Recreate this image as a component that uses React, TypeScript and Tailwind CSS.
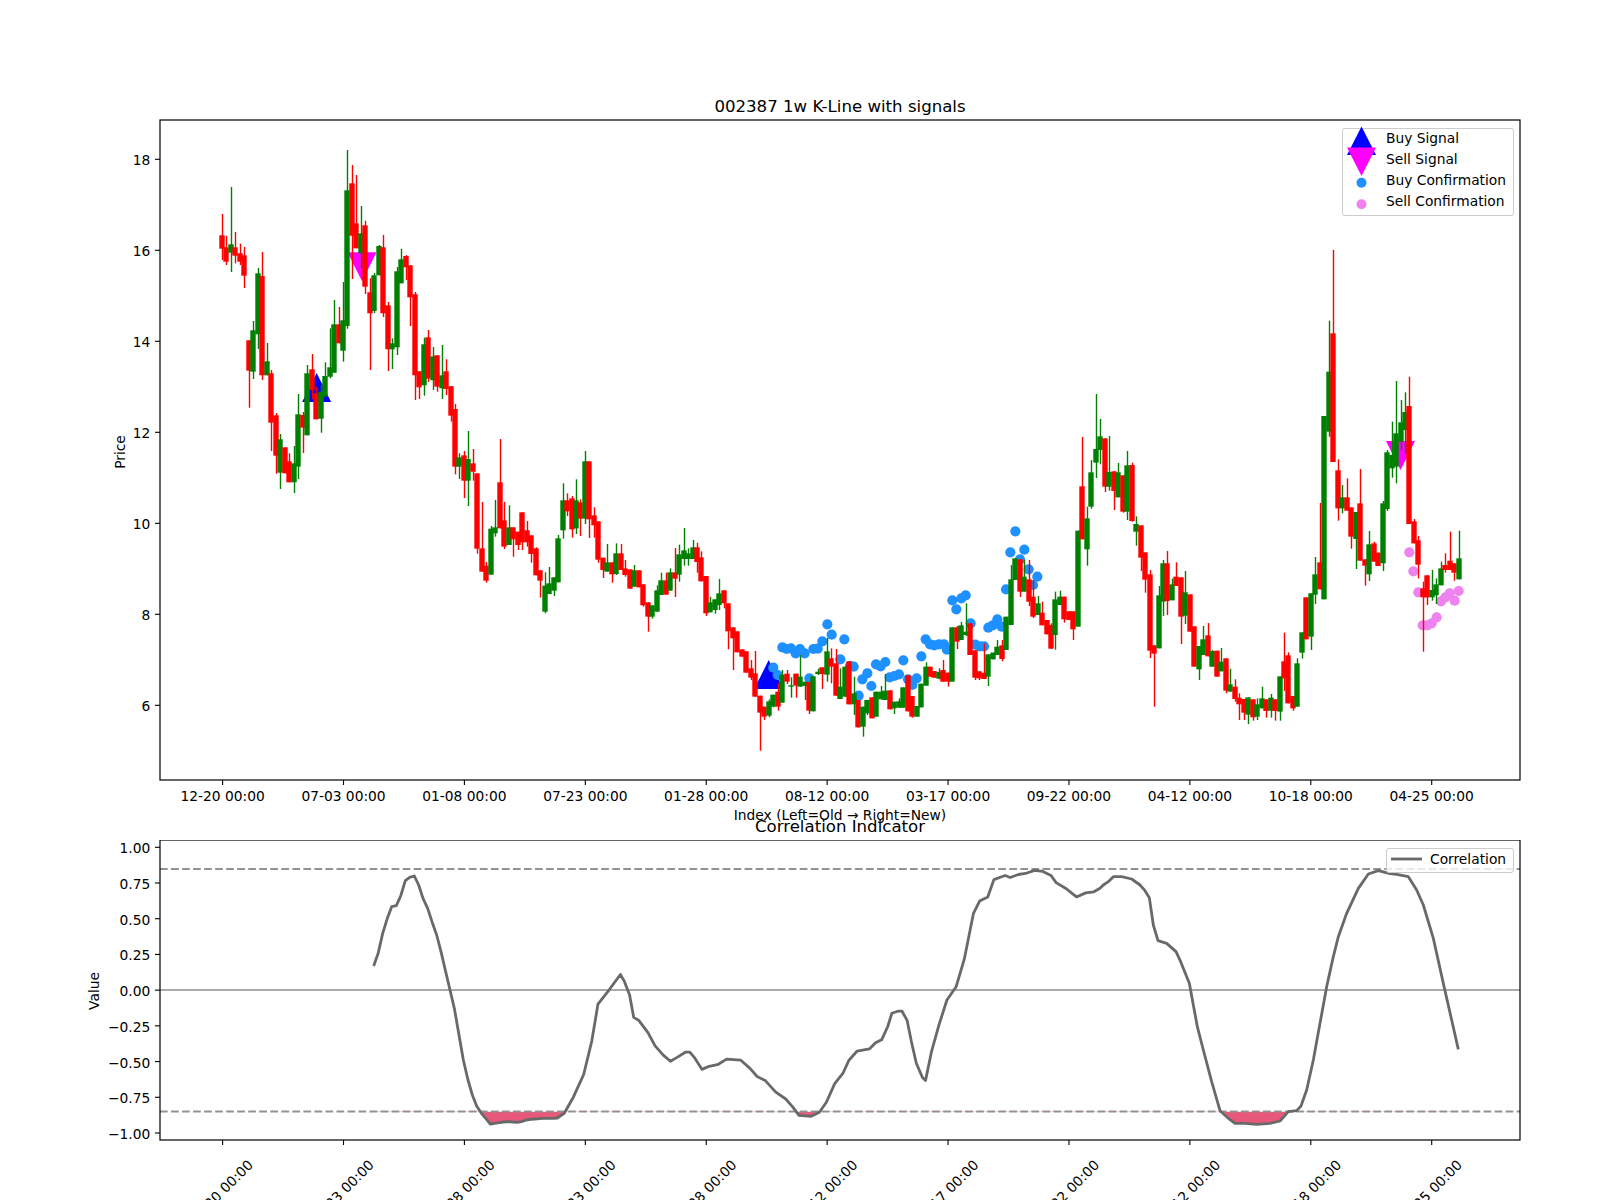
import React from 'react';

type Candle = ['r' | 'g', number, number, number, number];
type Pt = [number, number];

const font = "'DejaVu Sans', 'Liberation Sans', sans-serif";

const absRows: Candle[] = [
  ['r', 235.3, 248.7, 214, 260], ['r', 247.3, 261.7, 235.7, 265], ['g', 244.3, 252.7, 187, 272],
  ['r', 247.3, 255.7, 232, 263.3], ['r', 253.3, 261.7, 243.7, 265], ['r', 255.3, 275.7, 247, 288],
  ['r', 340.3, 370.7, 340.3, 407.7], ['g', 330.3, 371.7, 321, 379], ['g', 273.3, 334.3, 268, 349],
  ['r', 276, 375.3, 252, 380], ['g', 361.3, 375.3, 343, 375.3], ['r', 373.3, 422.7, 370, 451],
  ['r', 415.3, 455.7, 413, 473.7], ['g', 439.3, 472.7, 434, 489], ['r', 447.3, 473.3, 447.3, 473.3],
  ['r', 461.3, 482.3, 453.3, 482.3], ['g', 463.3, 482.3, 446, 493], ['g', 414.3, 466.7, 394, 479],
  ['r', 415, 427.7, 412, 453], ['g', 373.3, 435.3, 365, 435.3], ['r', 369.3, 390, 354, 399.3],
  ['r', 393.3, 419.3, 386.7, 419.3], ['g', 391.7, 418.7, 385, 432.7], ['g', 376, 396.7, 362.3, 396.7],
  ['g', 367.3, 376.7, 328.3, 378.3], ['g', 324.3, 372.7, 300, 372.7], ['r', 324.3, 343.3, 307, 343.3],
  ['g', 320.3, 350.7, 282, 361.7], ['g', 190.3, 326, 150, 328.7], ['r', 183.3, 235.7, 165, 279],
  ['r', 223.3, 248.3, 175, 248.3], ['g', 233.3, 253.3, 206, 269], ['r', 225.3, 286.7, 220.7, 294],
  ['r', 292.3, 313.3, 278.3, 370], ['g', 275.3, 311, 273, 313], ['g', 246, 275.3, 245, 275.3],
  ['r', 247.3, 313.3, 235, 317], ['r', 305.3, 349.3, 302, 371], ['g', 343.3, 349.3, 338.3, 369],
  ['g', 271.3, 347.3, 267, 355], ['g', 259.3, 283.3, 248.7, 283.3], ['r', 256, 267.3, 255, 280],
  ['r', 265.3, 297.3, 265.3, 326], ['r', 294.3, 375.3, 292, 400], ['r', 371.3, 387.3, 371.3, 399],
  ['g', 344.3, 385.3, 337.7, 395.7], ['r', 337.3, 378.7, 330, 382], ['g', 356.3, 380.3, 347, 390],
  ['r', 355.3, 386.7, 355.3, 391.7], ['g', 375.3, 388.3, 345, 399], ['r', 371.3, 389, 359.3, 395],
  ['r', 386.3, 415.7, 386, 421.7],
];

// rows below were read off 3x crops, y = y0 + value / 3
const rows380: Candle[] = [
  ['r', 87, 260, 72, 283], ['g', 232, 260, 220, 297], ['r', 226, 302, 213, 354], ['g', 237, 302, 153, 378],
  ['r', 250, 275, 207, 302], ['r', 280, 506, 280, 521], ['r', 505, 575, 366, 575], ['r', 557, 602, 546, 608],
  ['g', 446, 584, 438, 584], ['g', 442, 460, 360, 470], ['r', 307, 445, 177, 445], ['r', 421, 500, 366, 507],
  ['g', 442, 495, 376, 495], ['r', 442, 478, 442, 530], ['r', 455, 495, 455, 510], ['r', 397, 487, 397, 510],
  ['r', 451, 487, 423, 500], ['r', 466, 522, 466, 548], ['r', 505, 586, 502, 586], ['r', 571, 602, 571, 653],
  ['g', 617, 695, 577, 700], ['g', 610, 642, 561, 642], ['g', 592, 632, 592, 648], ['g', 475, 607, 465, 607],
];

const rows390: Candle[] = [
  ['g', 331, 421, 280, 446], ['r', 331, 364, 310, 378], ['r', 325, 418, 318, 443], ['g', 331, 415, 268, 432],
  ['r', 337, 386, 328, 438], ['g', 214, 386, 183, 402], ['r', 214, 388, 214, 444], ['r', 376, 406, 352, 443],
  ['r', 394, 509, 394, 518], ['r', 503, 540, 503, 564], ['g', 517, 545, 462, 545], ['r', 517, 553, 517, 578],
  ['g', 490, 552, 460, 555], ['r', 490, 540, 462, 540], ['r', 535, 555, 510, 560], ['r', 538, 596, 538, 596],
  ['g', 541, 590, 525, 590], ['r', 541, 592, 541, 592], ['r', 583, 646, 583, 650], ['r', 637, 680, 637, 725],
  ['g', 646, 680, 646, 686], ['g', 601, 665, 586, 665], ['g', 571, 615, 548, 615], ['r', 571, 614, 548, 614],
  ['g', 547, 602, 535, 602], ['r', 547, 566, 474, 621], ['g', 493, 554, 464, 575], ['g', 481, 507, 414, 527],
  ['g', 490, 507, 475, 527], ['g', 472, 507, 450, 507], ['r', 472, 516, 458, 548], ['r', 502, 574, 484, 574],
  ['r', 558, 670, 558, 678], ['g', 637, 667, 620, 667], ['g', 628, 660, 628, 671], ['g', 610, 645, 567, 660],
  ['r', 601, 640, 601, 655], ['r', 640, 724, 640, 778], ['r', 712, 745, 712, 840], ['r', 724, 787, 724, 787],
  ['r', 778, 800, 778, 800], ['r', 784, 848, 784, 848], ['r', 835, 863, 810, 870],
];

const rows500: Candle[] = [
  ['r', 520, 590, 453, 590], ['r', 587, 638, 587, 752], ['r', 620, 650, 620, 660], ['g', 604, 647, 598, 652],
  ['g', 584, 620, 584, 622], ['r', 575, 620, 550, 632], ['g', 524, 608, 510, 608], ['r', 521, 545, 510, 552],
  ['g', 556, 560, 532, 593], ['r', 521, 557, 521, 593], ['g', 530, 560, 465, 560], ['g', 545, 558, 545, 600],
  ['r', 546, 632, 546, 642], ['g', 529, 634, 529, 634], ['g', 515, 522, 506, 525], ['r', 502, 522, 502, 567],
  ['g', 454, 524, 414, 545], ['r', 475, 500, 445, 550], ['r', 490, 587, 447, 587], ['g', 560, 597, 505, 597],
  ['g', 500, 590, 500, 590], ['r', 484, 613, 484, 613], ['g', 580, 613, 530, 645], ['r', 600, 682, 600, 682],
  ['g', 620, 680, 620, 710], ['g', 600, 640, 600, 645], ['r', 592, 655, 592, 655], ['g', 575, 650, 575, 650],
  ['g', 575, 598, 558, 598], ['g', 572, 600, 522, 600], ['r', 571, 628, 571, 628], ['g', 605, 625, 605, 642],
  ['g', 604, 623, 595, 623], ['g', 562, 623, 562, 623], ['r', 526, 634, 526, 634], ['r', 588, 650, 588, 653],
  ['g', 618, 650, 618, 650], ['g', 551, 622, 551, 622], ['g', 500, 557, 487, 557], ['r', 500, 530, 500, 530],
  ['r', 513, 533, 513, 533], ['g', 516, 536, 505, 538], ['r', 510, 545, 480, 545], ['r', 518, 545, 518, 560],
  ['g', 382, 545, 382, 545], ['r', 382, 425, 378, 447], ['g', 376, 420, 366, 420], ['g', 395, 405, 310, 408],
  ['r', 370, 465, 370, 465], ['r', 451, 533, 451, 540], ['r', 514, 535, 514, 540], ['r', 518, 537, 430, 537],
  ['g', 463, 530, 463, 558], ['g', 458, 478, 458, 478], ['g', 440, 465, 420, 465], ['r', 436, 477, 420, 484],
  ['g', 350, 450, 350, 450], ['g', 238, 375, 195, 375], ['g', 175, 240, 175, 240], ['r', 178, 275, 178, 291],
  ['g', 230, 275, 180, 275], ['r', 238, 305, 180, 318], ['r', 290, 350, 240, 354], ['g', 310, 345, 288, 345],
  ['r', 338, 376, 305, 376], ['r', 360, 403, 360, 403], ['r', 375, 446, 370, 446],
];

const rows400: Candle[] = [
  ['g', 598, 705, 575, 749], ['g', 590, 615, 572, 615], ['r', 590, 658, 590, 668], ['r', 634, 660, 634, 660],
  ['r', 634, 688, 634, 720], ['g', 392, 680, 392, 680], ['r', 259, 418, 111, 418], ['g', 355, 448, 320, 497],
  ['g', 217, 320, 180, 326], ['g', 147, 188, -18, 234], ['g', 109, 150, 57, 193], ['r', 115, 260, 115, 276],
  ['g', 216, 260, 108, 272], ['r', 214, 273, 214, 330], ['g', 217, 292, 189, 292], ['r', 226, 335, 226, 338],
  ['g', 196, 335, 153, 360], ['r', 195, 363, 188, 365], ['g', 372, 395, 349, 437], ['r', 376, 473, 376, 513],
  ['r', 457, 539, 457, 578], ['r', 523, 752, 510, 774], ['r', 736, 761, 736, 920], ['g', 586, 745, 558, 745],
  ['g', 490, 605, 480, 648], ['r', 490, 603, 453, 645], ['g', 553, 601, 536, 601], ['r', 530, 558, 487, 558],
  ['r', 532, 650, 532, 732], ['g', 577, 647, 513, 672], ['r', 583, 695, 583, 695], ['r', 679, 800, 679, 800],
  ['g', 738, 808, 738, 840], ['g', 718, 765, 678, 765], ['r', 706, 769, 669, 769], ['g', 753, 800, 750, 800],
  ['r', 752, 830, 752, 830], ['g', 785, 814, 744, 814], ['r', 775, 872, 775, 880], ['g', 853, 875, 806, 875],
  ['r', 860, 897, 838, 905], ['r', 893, 913, 880, 960], ['r', 897, 938, 897, 960], ['g', 892, 944, 892, 972],
  ['r', 898, 952, 898, 962], ['g', 913, 950, 895, 960], ['g', 895, 925, 860, 925], ['r', 898, 933, 898, 953],
  ['g', 893, 932, 882, 953], ['r', 898, 933, 898, 962], ['g', 829, 935, 829, 962], ['r', 784, 835, 698, 873],
  ['r', 766, 910, 757, 910], ['r', 888, 925, 888, 932], ['g', 790, 920, 775, 920], ['g', 697, 758, 697, 776],
  ['r', 592, 718, 592, 718], ['g', 580, 710, 580, 750], ['g', 523, 584, 471, 612], ['r', 487, 568, 309, 568],
  ['g', 48, 598, 48, 598], ['g', -85, 95, -238, 110], ['r', -200, 186, -450, 186], ['r', 211, 325, 178, 362],
  ['g', 292, 325, 255, 340], ['r', 292, 332, 235, 332], ['r', 322, 410, 322, 446], ['g', 336, 417, 336, 507],
  ['r', 310, 482, 207, 482], ['r', 478, 497, 478, 557], ['g', 433, 523, 393, 543], ['r', 430, 485, 425, 485],
  ['r', 458, 498, 458, 498], ['g', 310, 490, 303, 513], ['g', 157, 327, 150, 333], ['g', 165, 205, 65, 233],
  ['g', 100, 200, -57, 250], ['g', 67, 125, 0, 150], ['g', 36, 90, -23, 160], ['r', 18, 372, -70, 372],
  ['r', 364, 430, 357, 430], ['r', 421, 494, 408, 535],
];

const rows510: Candle[] = [
  ['r', 235, 262, 215, 425], ['r', 196, 262, 196, 285], ['g', 240, 262, 180, 272], ['g', 223, 256, 205, 282],
  ['g', 175, 226, 155, 226], ['r', 165, 180, 130, 188], ['r', 152, 180, 65, 180], ['r', 160, 188, 160, 212],
  ['g', 145, 208, 62, 208],
];

const frame = (y0: number, rows: Candle[]): Candle[] =>
  rows.map(([c, a, b, d, e]) => [c, y0 + a / 3, y0 + b / 3, y0 + d / 3, y0 + e / 3] as Candle);

const candles: Candle[] = [
  ...absRows,
  ...frame(380, rows380),
  ...frame(390, rows390),
  ...frame(500, rows500),
  ...frame(400, rows400),
  ...frame(510, rows510),
];

const blueDots: Pt[] = ([
  [220, 503], [233, 525], [247, 442], [260, 447], [273, 445], [287, 460], [300, 447], [314, 460], [328, 535],
  [340, 447], [353, 446], [367, 424], [382, 373], [395, 404], [421, 478], [433, 418], [450, 498], [461, 500],
  [476, 587], [487, 538], [502, 520], [514, 558], [528, 493], [542, 499], [556, 486], [569, 532], [583, 528],
  [597, 523], [610, 481], [624, 538], [637, 555], [650, 535], [664, 469], [677, 418], [690, 433], [703, 436],
  [717, 433], [732, 433], [741, 449], [757, 301], [769, 328], [784, 295], [797, 286], [812, 370], [826, 434],
  [839, 439], [852, 439], [865, 383], [878, 376], [892, 358], [905, 380], [918, 268], [931, 157], [946, 94],
  [960, 178], [973, 149], [986, 208], [999, 255], [1012, 230],
] as Pt[]).map(([x, y]) => [700 + x / 3, 500 + y / 3] as Pt);

const pinkDots: Pt[] = ([
  [88, 127], [100, 184], [115, 247], [128, 346], [142, 346], [155, 340], [170, 322], [183, 274], [196, 262],
  [209, 250], [224, 272], [236, 243],
] as Pt[]).map(([x, y]) => [1380 + x / 3, 510 + y / 3] as Pt);

const corrLeft: Pt[] = ([
  [941, 588], [955, 548], [968, 490], [982, 445], [995, 410], [1009, 407], [1022, 378], [1036, 332], [1049, 322],
  [1063, 318], [1076, 345], [1089, 385], [1103, 415], [1116, 455], [1130, 495], [1143, 545], [1157, 605], [1170, 660],
  [1183, 715], [1197, 795], [1210, 870], [1224, 930], [1237, 975], [1250, 1008], [1264, 1030], [1277, 1045], [1291, 1062],
  [1304, 1060], [1318, 1058], [1331, 1056], [1345, 1055], [1358, 1056], [1371, 1057], [1385, 1055], [1398, 1050],
  [1412, 1048], [1425, 1047], [1438, 1046], [1452, 1045], [1465, 1045], [1479, 1045], [1492, 1044],
] as Pt[]).map(([x, y]) => [60 + x / 3, 770 + y / 3] as Pt);

const corrMiddle: Pt[] = ([
  [553, 1091], [562, 1075], [572, 1053], [580, 1020], [586, 984], [597, 970], [608, 955], [612, 962], [617, 975],
  [621, 997], [626, 1000], [635, 1012], [642, 1025], [650, 1034], [657, 1040], [664, 1036], [672, 1031], [676, 1031],
  [681, 1037], [688, 1048], [695, 1045], [704, 1043], [712, 1038], [726, 1039], [735, 1047], [742, 1055], [750, 1059],
  [760, 1070], [770, 1077], [777, 1085], [783, 1093], [795, 1094], [803, 1090], [810, 1080], [818, 1062], [826, 1052],
  [832, 1039], [840, 1030], [852, 1028], [858, 1022], [864, 1019], [870, 1006], [874, 993], [880, 991], [884, 991],
  [889, 1000], [893, 1020], [898, 1042], [904, 1056], [907, 1059], [913, 1030], [920, 1005], [928, 980], [937, 967],
  [945, 940], [954, 895], [960, 883], [968, 879], [974, 862], [985, 858], [990, 860], [998, 857], [1005, 856],
  [1014, 853], [1022, 854], [1030, 858], [1035, 865], [1045, 871], [1050, 875], [1055, 879], [1064, 875], [1072, 874],
] as Pt[]).map(([x, y]) => [x / 0.98, y / 0.98] as Pt);

const corrRight: Pt[] = ([
  [0, 355], [10, 345], [25, 335], [40, 320], [65, 320], [95, 327], [120, 345], [135, 362], [148, 383], [160, 465],
  [174, 512], [200, 520], [228, 545], [242, 575], [268, 640], [292, 770], [310, 840], [335, 935], [360, 1022],
  [385, 1045], [405, 1060], [435, 1060], [470, 1063], [510, 1060], [540, 1053], [565, 1025], [590, 1022], [603, 1008],
  [620, 960], [640, 870], [660, 760], [680, 650], [700, 560], [715, 500], [740, 430], [775, 355], [805, 312], [835, 302],
  [870, 311], [890, 313], [925, 320], [950, 360], [970, 405], [1000, 505], [1030, 640], [1055, 750], [1075, 838],
] as Pt[]).map(([x, y]) => [1100 + x / 3, 770 + y / 3] as Pt);

const corr: Pt[] = [...corrLeft, ...corrMiddle, ...corrRight];
const corrPoints = corr.map(p => p.join(',')).join(' ');
const corrFill = `${corrPoints} ${corr[corr.length - 1][0]},1111.4 ${corr[0][0]},1111.4`;

const barX = (i: number) => 222.5 + 4.481 * i;
const tickXs = Array.from({ length: 11 }, (_, i) => 222.6 + 120.91 * i);
const dates = ['12-20 00:00', '07-03 00:00', '01-08 00:00', '07-23 00:00', '01-28 00:00', '08-12 00:00', '03-17 00:00', '09-22 00:00', '04-12 00:00', '10-18 00:00', '04-25 00:00'];
const priceTicks = [18, 16, 14, 12, 10, 8, 6];
const priceY = (p: number) => 159.3 + (18 - p) * 45.5;
const corrTicks = ['1.00', '0.75', '0.50', '0.25', '0.00', '\u22120.25', '\u22120.50', '\u22120.75', '\u22121.00'];

const Tri: React.FC<{ x: number; top: number; down?: boolean; fill: string }> = ({ x, top, down, fill }) => (
  <polygon
    points={down
      ? `${x - 14.5},${top} ${x + 14.5},${top} ${x},${top + 29}`
      : `${x},${top} ${x + 14.5},${top + 29} ${x - 14.5},${top + 29}`}
    fill={fill}
  />
);

const LegendRow: React.FC<{ label: string; children: React.ReactNode }> = ({ label, children }) => (
  <div className="flex items-center h-[21px]">
    <svg width="43" height="21" className="overflow-visible shrink-0">{children}</svg>
    <span className="leading-[21px] text-black">{label}</span>
  </div>
);

const PriceChart = () => (
  <svg width="1600" height="700" viewBox="0 120 1600 700" className="block overflow-visible" fontFamily={font} fontSize="13.8" fill="#000">
    <Tri x={316.6} top={373} fill="#0000ff" />
    <Tri x={768.7} top={660} fill="#0000ff" />
    <Tri x={362} top={252.3} down fill="#ff00ff" />
    <Tri x={1400.5} top={441} down fill="#ff00ff" />
    {blueDots.map(([x, y], i) => <circle key={i} cx={x} cy={y} r="5.1" fill="#1e90ff" />)}
    {pinkDots.map(([x, y], i) => <circle key={i} cx={x} cy={y} r="5.1" fill="#ee82ee" />)}
    {candles.map(([c, top, bottom, wickTop, wickBottom], i) => {
      const x = Math.floor(barX(i));
      const color = c === 'r' ? '#ff0000' : '#008000';
      return (
        <g key={i} fill={color}>
          <rect x={x - 0.2} y={wickTop} width="1.4" height={Math.max(wickBottom - wickTop, 0)} />
          <rect x={x - 2.7} y={top} width="5.4" height={bottom - top} />
        </g>
      );
    })}
    <rect x="160" y="120" width="1360" height="660" fill="none" stroke="#000" strokeWidth="1.2" />
    {priceTicks.map(p => (
      <g key={p}>
        <line x1="155" x2="160" y1={priceY(p)} y2={priceY(p)} stroke="#000" strokeWidth="1.1" />
        <text x="150.3" y={priceY(p) + 6} textAnchor="end">{p}</text>
      </g>
    ))}
    {tickXs.map((x, i) => (
      <g key={i}>
        <line x1={x} x2={x} y1="780" y2="785" stroke="#000" strokeWidth="1.1" />
        <text x={x} y="801" textAnchor="middle">{dates[i]}</text>
      </g>
    ))}
    <text transform="translate(124.5 452) rotate(-90)" textAnchor="middle">Price</text>
    <text x="840" y="820" textAnchor="middle">Index (Left=Old → Right=New)</text>
  </svg>
);

const CorrelationChart = () => (
  <svg width="1600" height="360" viewBox="0 840 1600 360" className="block" fontFamily={font} fontSize="13.8" fill="#000">
    <defs>
      <clipPath id="below-band">
        <rect x="160" y="1111.4" width="1360" height="30" />
      </clipPath>
    </defs>
    <polygon points={corrFill} fill="#e8587a" clipPath="url(#below-band)" />
    <line x1="160" x2="1520" y1="990" y2="990" stroke="#aaaaaa" strokeWidth="2" />
    <line x1="160" x2="1520" y1="869" y2="869" stroke="#929292" strokeWidth="2" strokeDasharray="7.7 3.33" />
    <line x1="160" x2="1520" y1="1111.4" y2="1111.4" stroke="#929292" strokeWidth="2" strokeDasharray="7.7 3.33" />
    <polyline points={corrPoints} fill="none" stroke="#696969" strokeWidth="2.8" strokeLinejoin="round" />
    <rect x="160" y="840" width="1360" height="300" fill="none" stroke="#000" strokeWidth="1.2" />
    {corrTicks.map((t, i) => {
      const y = 847.3 + i * 35.71;
      return (
        <g key={t}>
          <line x1="155" x2="160" y1={y} y2={y} stroke="#000" strokeWidth="1.1" />
          <text x="150.3" y={y + 6} textAnchor="end">{t}</text>
        </g>
      );
    })}
    {tickXs.map((x, i) => (
      <g key={i}>
        <line x1={x} x2={x} y1="1140" y2="1145" stroke="#000" strokeWidth="1.1" />
        <text transform={`translate(${x - 2} 1192) rotate(-45)`} y="5" textAnchor="middle">{dates[i]}</text>
      </g>
    ))}
    <text transform="translate(99 991) rotate(-90)" textAnchor="middle">Value</text>
  </svg>
);

export default function App() {
  return (
    <div className="w-[1600px] h-[1200px] bg-white overflow-hidden text-[13.8px] text-black font-['DejaVu_Sans','Liberation_Sans',sans-serif]">
      <h2 className="h-[120px] flex items-end justify-center pl-[80px] pb-[3px] text-[16.6px] leading-[20px] font-normal">
        002387 1w K-Line with signals
      </h2>
      <div className="relative">
        <PriceChart />
        <div className="absolute top-[7.5px] left-[1342px] w-[171.5px] h-[88px] bg-white/80 border border-[#cccccc] rounded-[3px]">
          <div className="-mt-px">
            <LegendRow label="Buy Signal">
              <polygon points="18.5,-1.5 33,27 4,27" fill="#0000ff" />
            </LegendRow>
            <LegendRow label="Sell Signal">
              <polygon points="4,-1.5 33,-1.5 18.5,27" fill="#ff00ff" />
            </LegendRow>
            <LegendRow label="Buy Confirmation">
              <circle cx="18.5" cy="12.8" r="5" fill="#1e90ff" />
            </LegendRow>
            <LegendRow label="Sell Confirmation">
              <circle cx="18.5" cy="13.2" r="5" fill="#ee82ee" />
            </LegendRow>
          </div>
        </div>
      </div>
      <h2 className="h-[20px] flex items-end justify-center pl-[80px] pb-[3px] text-[16.6px] leading-[20px] font-normal">
        Correlation Indicator
      </h2>
      <div className="relative">
        <CorrelationChart />
        <div className="absolute top-[7.5px] left-[1386px] w-[127.5px] h-[25px] flex items-center bg-white/80 border border-[#cccccc] rounded-[3px] pb-[2px]">
          <svg width="43" height="12" className="shrink-0">
            <line x1="4" x2="35" y1="6" y2="6" stroke="#696969" strokeWidth="2.8" />
          </svg>
          <span className="text-black">Correlation</span>
        </div>
      </div>
    </div>
  );
}
